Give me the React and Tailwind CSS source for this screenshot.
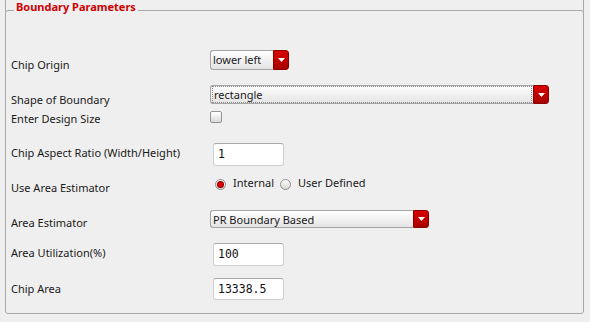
import React from "react";

const font = { fontFamily: '"Noto Sans", "Open Sans", sans-serif' };

function Arrow() {
  return (
    <svg width="7" height="4" viewBox="0 0 7 4" className="block">
      <polygon points="0,0 7,0 3.5,4" fill="#ffffff" />
    </svg>
  );
}

function Combo({ width, height, text, focus }) {
  return (
    <div className="flex" style={{ width, height }}>
      <div className="flex-1 flex border border-r-0 border-[#a4a4a4] rounded-l-[3px] bg-gradient-to-b from-[#ffffff] to-[#e4e4e4] p-0 overflow-hidden">
        {focus ? (
          <div className="flex-1 ml-[1px] mr-[1px] border border-dotted border-[#8a8a8a] flex items-start pl-[1px]">
            <span className="text-[11px] leading-[15px] text-[#1a1a1a]">{text}</span>
          </div>
        ) : (
          <div className="flex-1 flex items-start pl-[2px] pt-[1px]">
            <span className="text-[11px] leading-[15px] text-[#1a1a1a]">{text}</span>
          </div>
        )}
      </div>
      <div className="w-[16px] flex items-center justify-center rounded-r-[3px] border border-[#8c0000] bg-gradient-to-b from-[#d80000] to-[#a80000]">
        <Arrow />
      </div>
    </div>
  );
}

function Input({ value, h }) {
  return (
    <div
      className="ml-[3px] w-[71px] flex items-center pl-[4px] bg-white border border-[#cfcfcf] border-t-[#a8a8a8] rounded-[3px]"
      style={{ height: h }}
    >
      <span
        className="text-[11.5px] leading-[15px] text-[#111]"
        style={{ fontFamily: '"DejaVu Sans Mono", "Liberation Mono", monospace' }}
      >
        {value}
      </span>
    </div>
  );
}

function Radio({ checked }) {
  return (
    <div className="mt-[4px] w-[11px] h-[11px] rounded-full border border-[#8e8e8e] bg-gradient-to-b from-[#ffffff] to-[#d6d6d6] flex items-center justify-center">
      {checked && <div className="w-[5px] h-[5px] rounded-full bg-[#e00000] ring-1 ring-[#900000]" />}
    </div>
  );
}

function Label({ children, pt }) {
  return (
    <div className="w-[199px] shrink-0 text-[11px] leading-[15px] text-[#1a1a1a]" style={{ paddingTop: pt }}>
      {children}
    </div>
  );
}

export default function App() {
  return (
    <div className="relative w-[590px] h-[322px] bg-[#efefef] overflow-hidden" style={font}>
      <div className="absolute left-[5px] top-0 w-px h-[12px] bg-[#a8a8a8]" />
      <div className="absolute left-[583px] top-0 w-px h-[12px] bg-[#a8a8a8]" />
      <div className="pt-[10px] pl-[5px]">
        <div className="relative w-[579px] h-[304px] border border-[#a8a8a8] rounded-[3px]">
          <div className="absolute left-[8px] top-[-12px] px-[2px] bg-[#efefef] text-[11px] leading-[15px] font-bold text-[#d00000]">
            Boundary Parameters
          </div>
          <div className="flex flex-col pl-[5px]">
            <div className="mt-[39px] flex items-start h-[20px]">
              <Label pt={7}>Chip Origin</Label>
              <Combo width={79} height={20} text="lower left" />
            </div>
            <div className="mt-[15px] flex items-start h-[19px]">
              <Label pt={7}>Shape of Boundary</Label>
              <Combo width={339} height={19} text="rectangle" focus />
            </div>
            <div className="mt-[6px] flex items-start h-[15px]">
              <Label pt={1}>Enter Design Size</Label>
              <div className="mt-[1px] w-[12px] h-[12px] rounded-[2px] border border-[#939393] bg-gradient-to-b from-[#ffffff] to-[#d8d8d8]" />
            </div>
            <div className="mt-[18px] flex items-start h-[23px]">
              <Label pt={2}>Chip Aspect Ratio (Width/Height)</Label>
              <Input value="1" h={23} />
            </div>
            <div className="mt-[8px] flex items-start h-[20px]">
              <Label pt={6}>Use Area Estimator</Label>
              <div className="flex items-start ml-[5px] mt-[1px] text-[11px] leading-[15px] text-[#1a1a1a]">
                <Radio checked />
                <span className="ml-[7px]">Internal</span>
                <div className="ml-[6px]">
                  <Radio />
                </div>
                <span className="ml-[7px]">User Defined</span>
              </div>
            </div>
            <div className="mt-[16px] flex items-start h-[18px]">
              <Label pt={5}>Area Estimator</Label>
              <Combo width={219} height={18} text="PR Boundary Based" />
            </div>
            <div className="mt-[15px] flex items-start h-[23px]">
              <Label pt={2}>Area Utilization(%)</Label>
              <Input value="100" h={23} />
            </div>
            <div className="mt-[12px] flex items-start h-[22px]">
              <Label pt={3}>Chip Area</Label>
              <Input value="13338.5" h={22} />
            </div>
          </div>
        </div>
      </div>
    </div>
  );
}
